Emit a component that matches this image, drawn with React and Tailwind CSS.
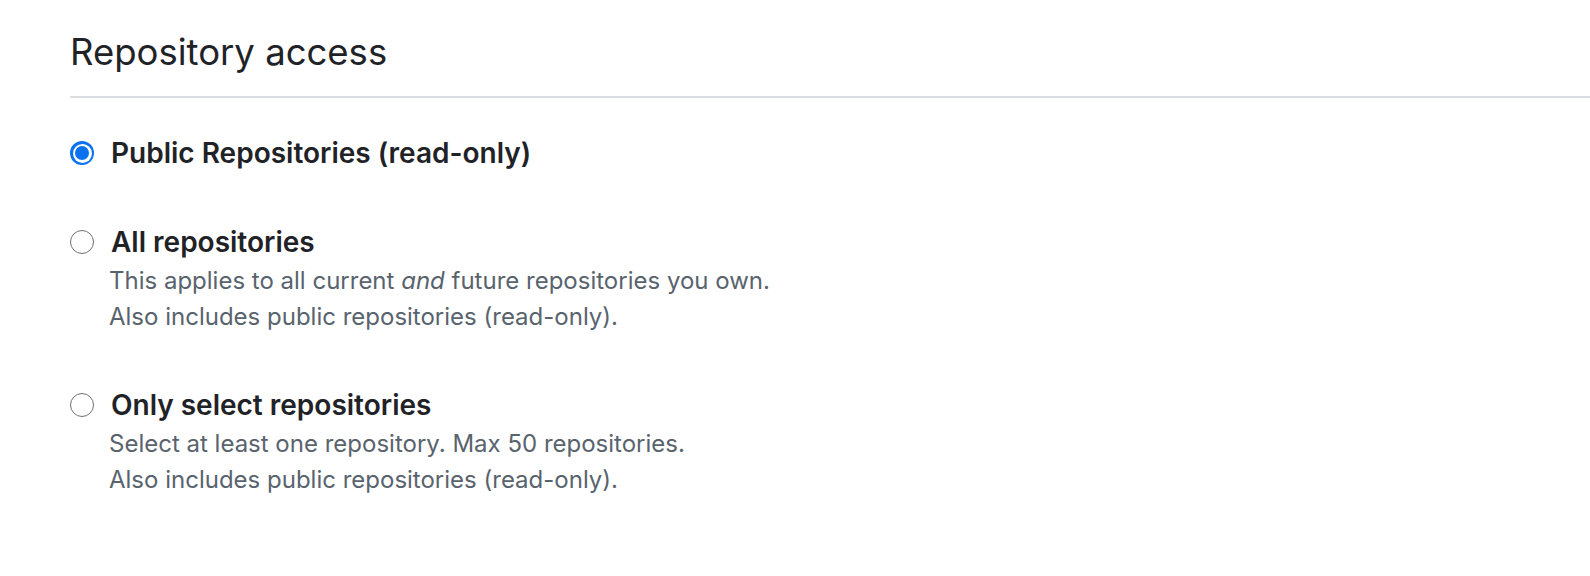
import React from "react";

function Radio({ checked }) {
  if (checked) {
    return (
      <span className="flex h-[24px] w-[24px] shrink-0 items-center justify-center rounded-full bg-[#0a72f0]">
        <span className="flex h-[19px] w-[19px] items-center justify-center rounded-full bg-white">
          <span className="h-[14px] w-[14px] rounded-full bg-[#0a72f0]" />
        </span>
      </span>
    );
  }
  return <span className="h-[24px] w-[24px] shrink-0 rounded-full border-[1.5px] border-[#6e7073] bg-white" />;
}

function Option({ checked, label, children, className }) {
  return (
    <div className={"flex flex-col " + (className || "")}>
      <div className="flex h-[32px] items-center gap-[17px]">
        <Radio checked={checked} />
        <span className="text-[28px] font-semibold leading-[32px] text-[#1f2328]">{label}</span>
      </div>
      {children && (
        <div className="pl-[39px] pt-[5px] text-[24px] leading-[36px] text-[#59636e]">{children}</div>
      )}
    </div>
  );
}

export default function App() {
  return (
    <div className="min-h-[576px] bg-white pl-[70px] pt-[29px]" style={{ fontFamily: "Inter, 'Noto Sans', sans-serif" }}>
      <h2 className="text-[36.5px] font-normal leading-[46px] text-[#1f2328]">Repository access</h2>
      <div className="mt-[21px] h-[2px] bg-[#dadee2]" />
      <div className="flex flex-col pt-[39px]">
        <Option checked label="Public Repositories (read-only)" />
        <Option className="mt-[57px]" label="All repositories">
          <div>This applies to all current <em>and</em> future repositories you own.</div>
          <div>Also includes public repositories (read-only).</div>
        </Option>
        <Option className="mt-[54px]" label="Only select repositories">
          <div>Select at least one repository. Max 50 repositories.</div>
          <div>Also includes public repositories (read-only).</div>
        </Option>
      </div>
    </div>
  );
}
